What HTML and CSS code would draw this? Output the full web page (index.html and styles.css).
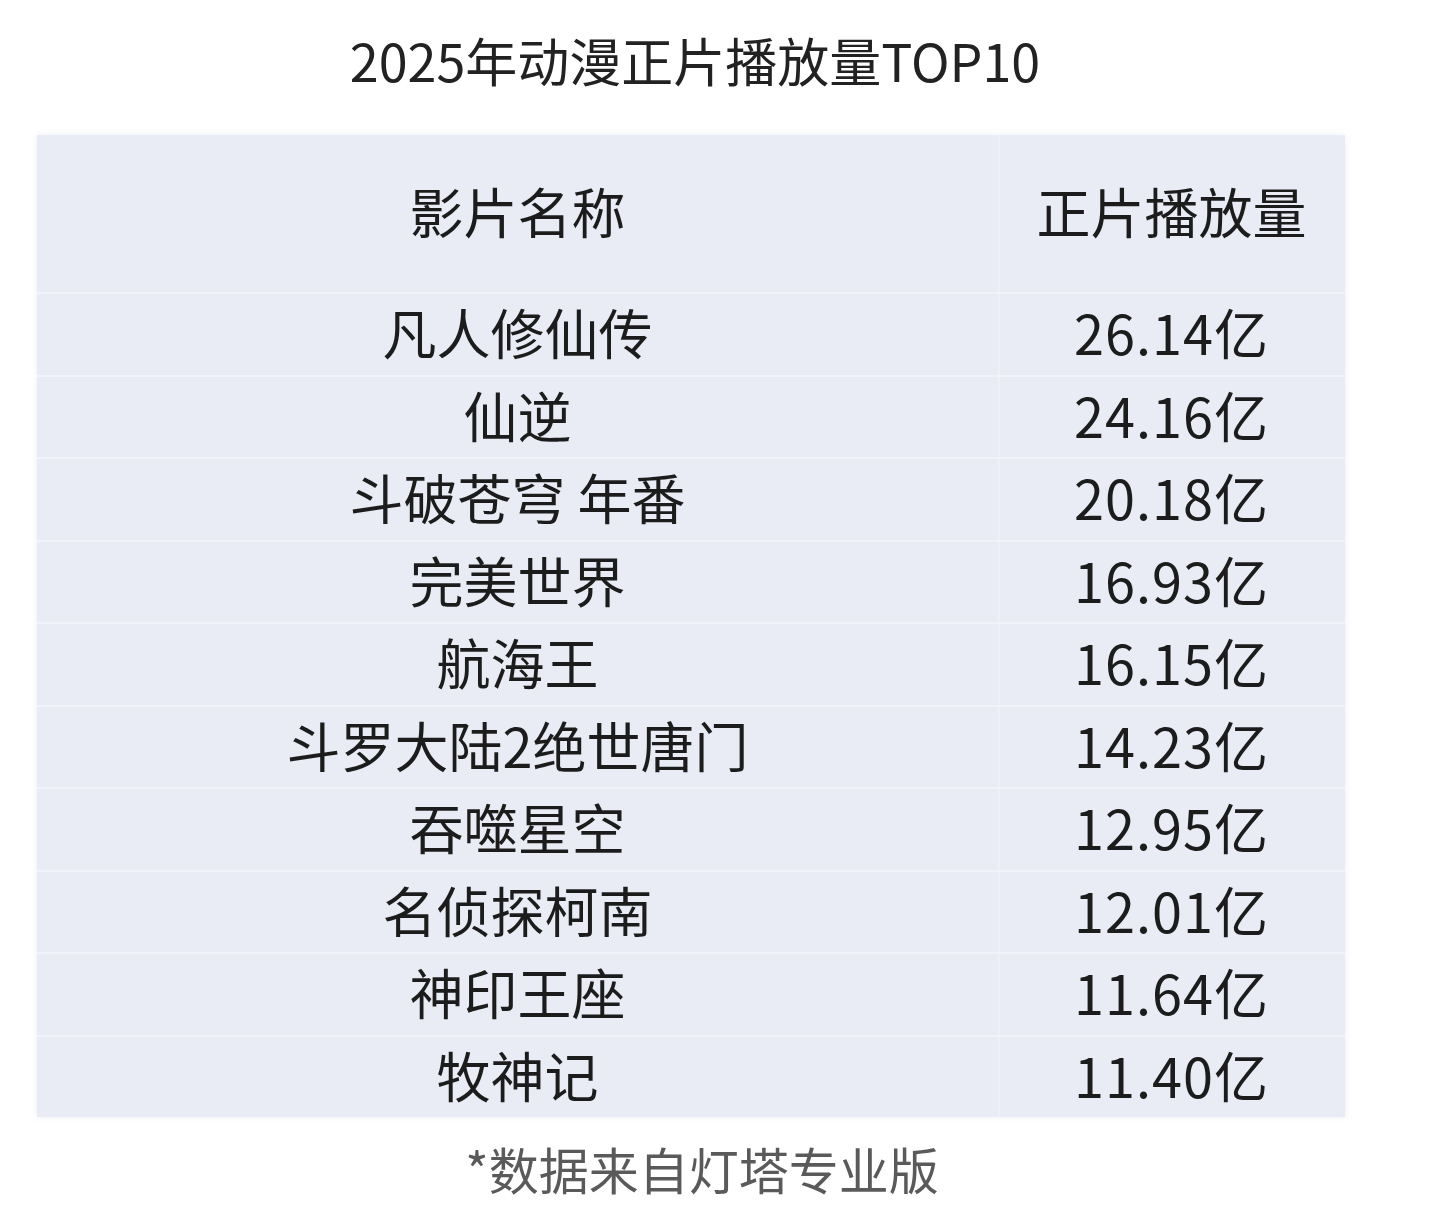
FILE: index.html
```html
<!DOCTYPE html>
<html lang="zh-CN">
<head>
<meta charset="utf-8">
<title>2025年动漫正片播放量TOP10</title>
<link rel="stylesheet" href="styles.css">
</head>
<body>
<div class="page">
  <h1 class="title">2025年动漫正片播放量TOP10</h1>
  <div class="table">
    <div class="row head">
      <div class="cell name">影片名称</div>
      <div class="cell value">正片播放量</div>
    </div>
    <div class="row"><div class="cell name">凡人修仙传</div><div class="cell value">26.14亿</div></div>
    <div class="row"><div class="cell name">仙逆</div><div class="cell value">24.16亿</div></div>
    <div class="row"><div class="cell name">斗破苍穹 年番</div><div class="cell value">20.18亿</div></div>
    <div class="row"><div class="cell name">完美世界</div><div class="cell value">16.93亿</div></div>
    <div class="row"><div class="cell name">航海王</div><div class="cell value">16.15亿</div></div>
    <div class="row"><div class="cell name">斗罗大陆2绝世唐门</div><div class="cell value">14.23亿</div></div>
    <div class="row"><div class="cell name">吞噬星空</div><div class="cell value">12.95亿</div></div>
    <div class="row"><div class="cell name">名侦探柯南</div><div class="cell value">12.01亿</div></div>
    <div class="row"><div class="cell name">神印王座</div><div class="cell value">11.64亿</div></div>
    <div class="row"><div class="cell name">牧神记</div><div class="cell value">11.40亿</div></div>
  </div>
  <p class="note">*数据来自灯塔专业版</p>
</div>
</body>
</html>
```
FILE: styles.css
```css
* { box-sizing: border-box; }
html, body {
  margin: 0;
  padding: 0;
  background: #ffffff;
}
body {
  font-family: "Noto Sans CJK SC", "Noto Sans", sans-serif;
  color: #1c1c1c;
}
.page {
  width: 1440px;
  height: 1208px;
  overflow: hidden;
  display: flex;
  flex-direction: column;
}
.page > * {
  flex-shrink: 0;
}
.title {
  margin: 0;
  height: 135px;
  line-height: 120px;
  font-size: 52px;
  font-weight: 400;
  text-align: center;
  padding-right: 50px;
  color: #222;
  letter-spacing: 0;
}
.table {
  margin-left: 37px;
  width: 1308px;
  background: #e9ecf5;
  display: flex;
  flex-direction: column;
  box-shadow: 0 0 6px rgba(200, 205, 220, 0.35);
}
.row {
  display: grid;
  grid-template-columns: 963px 345px;
  height: 82.5px;
  border-top: 2px solid #f1f3fa;
}
.row.head {
  height: 157px;
  border-top: none;
}
.cell {
  display: flex;
  align-items: center;
  justify-content: center;
  font-size: 54px;
  line-height: 1;
  color: #1c1c1c;
  padding-bottom: 4px;
}
.cell.name {
  border-right: 2px solid #eef0f8;
}
.cell.value {
  padding-right: 2px;
  letter-spacing: 1px;
}
.row.head .cell.value {
  letter-spacing: 0;
}
.row.head .cell {
  padding-bottom: 6px;
}
.note {
  margin: 0;
  padding-top: 12px;
  padding-right: 36px;
  line-height: 78px;
  font-size: 50px;
  text-align: center;
  color: #5a5a5a;
}
```
